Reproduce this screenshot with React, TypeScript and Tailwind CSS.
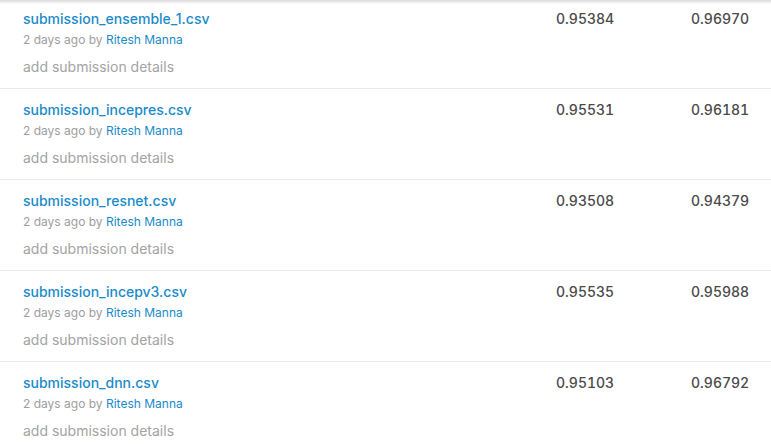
const submissions = [
  { file: "submission_ensemble_1.csv", priv: "0.95384", pub: "0.96970" },
  { file: "submission_incepres.csv", priv: "0.95531", pub: "0.96181" },
  { file: "submission_resnet.csv", priv: "0.93508", pub: "0.94379" },
  { file: "submission_incepv3.csv", priv: "0.95535", pub: "0.95988" },
  { file: "submission_dnn.csv", priv: "0.95103", pub: "0.96792" },
];

function SubmissionRow({ file, priv, pub }: { file: string; priv: string; pub: string }) {
  return (
    <div className="flex border-b border-[#ebebeb] pl-[23px] pt-[11px] pb-[11px]">
      <div className="flex-1">
        <a href="#" className="block text-[14px] leading-[20px] font-medium text-[#1a8bc9]">
          {file}
        </a>
        <div className="mt-[3px] text-[12px] leading-[16px] text-[#9e9e9e]">
          2 days ago by <span className="text-[#1a8bc9]">Ritesh Manna</span>
        </div>
        <div className="mt-[9px] text-[14px] leading-[20px] text-[#a3a3a3]">add submission details</div>
      </div>
      <div className="w-[135px] text-[14px] leading-[20px] font-medium tabular-nums text-[#4a4a4a]">{priv}</div>
      <div className="w-[80px] text-[14px] leading-[20px] font-medium tabular-nums text-[#4a4a4a]">{pub}</div>
    </div>
  );
}

export default function App() {
  return (
    <div className="relative h-[444px] w-[771px] overflow-hidden bg-white font-['Inter',sans-serif]">
      <div className="pointer-events-none absolute inset-x-0 top-0 z-10 h-[4px] bg-gradient-to-b from-black/15 to-transparent" />
      <div className="-mt-[2px]">
        {submissions.map((s) => (
          <SubmissionRow key={s.file} {...s} />
        ))}
      </div>
    </div>
  );
}
